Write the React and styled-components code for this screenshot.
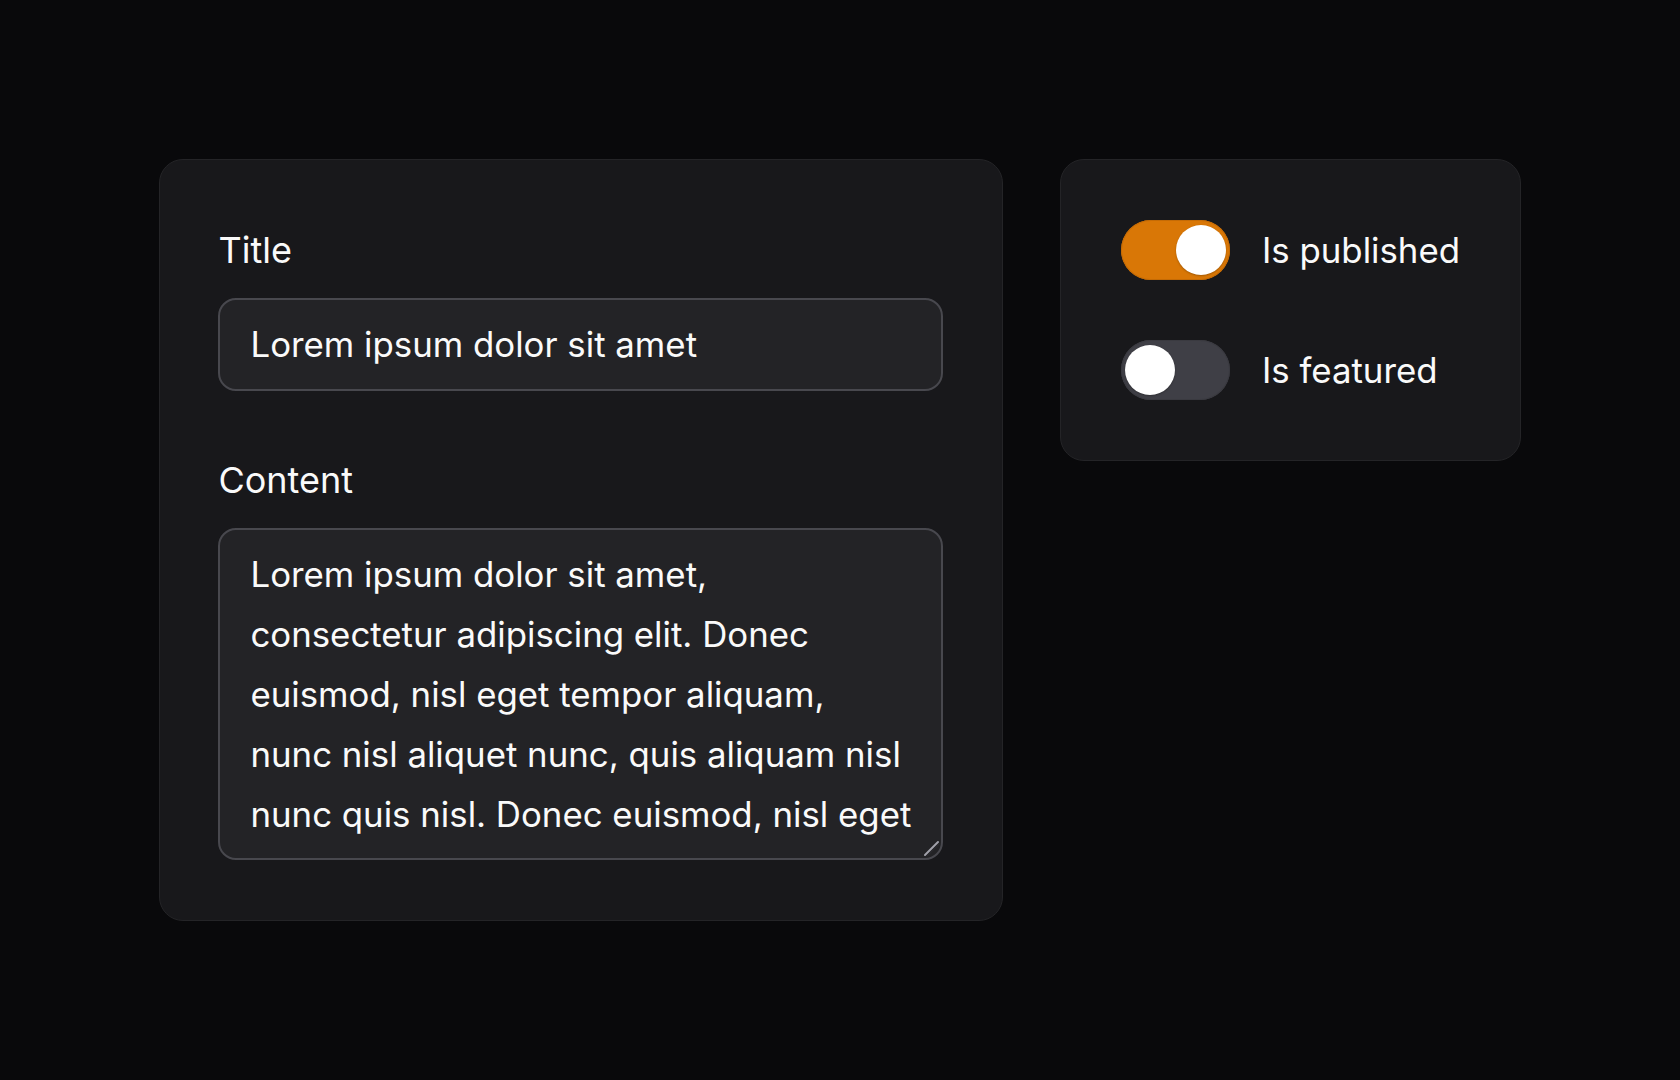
import React, { useState } from "react";
import styled, { createGlobalStyle } from "styled-components";

const Global = createGlobalStyle`
  * { box-sizing: border-box; }
  html, body { margin: 0; padding: 0; background: #09090b; }
  body { font-family: Inter, "Noto Sans", sans-serif; color: #fafafa; }
`;

const Page = styled.div`
  min-height: 100vh;
  display: flex;
  align-items: center;
  justify-content: center;
`;

const Row = styled.div`
  display: flex;
  align-items: flex-start;
  gap: 57px;
`;

const Card = styled.div`
  background: #18181b;
  border: 1.5px solid #242427;
  border-radius: 24px;
  padding: ${(p) => p.$pad || "60px"};
  width: ${(p) => p.$width || "auto"};
  display: flex;
  flex-direction: column;
  gap: ${(p) => p.$gap || "60px"};
`;

const Field = styled.div`
  display: flex;
  flex-direction: column;
  gap: 18px;
`;

const Label = styled.label`
  font-size: 36px;
  line-height: 60px;
  color: #fafafa;
`;

const Input = styled.input`
  font-family: inherit;
  font-size: 34.8px;
  line-height: 60px;
  height: 93px;
  padding: 15px 30px;
  color: #fafafa;
  background: #232326;
  border: 2px solid #48484e;
  border-radius: 18px;
  outline: none;
  width: 100%;
`;

const AreaWrap = styled.div`
  position: relative;
  display: flex;
`;

const TextArea = styled.textarea`
  font-family: inherit;
  font-size: 34.8px;
  line-height: 60px;
  height: 332px;
  padding: 14px 20px 14px 30px;
  color: #fafafa;
  background: #232326;
  border: 2px solid #48484e;
  border-radius: 18px;
  outline: none;
  width: 100%;
  overflow: hidden;
  white-space: pre;
  resize: none;
`;

const ResizeGrip = styled.svg`
  position: absolute;
  right: 3px;
  bottom: 3px;
  width: 18px;
  height: 18px;
  pointer-events: none;
`;

const ToggleRow = styled.div`
  display: flex;
  align-items: center;
  gap: 32px;
`;

const Track = styled.button`
  position: relative;
  width: 109px;
  height: 60px;
  border: none;
  padding: 0;
  border-radius: 30px;
  cursor: pointer;
  flex: none;
  background: ${(p) => (p.$on ? "#d97706" : "#3f3f46")};
  box-shadow: inset 0 0 0 1px ${(p) => (p.$on ? "#c56b05" : "#3a3a40")};
`;

const Knob = styled.span`
  position: absolute;
  top: 5px;
  left: ${(p) => (p.$on ? "55px" : "4.5px")};
  width: 50px;
  height: 50px;
  border-radius: 50%;
  background: #ffffff;
  box-shadow: 0 1px 2px rgba(0, 0, 0, 0.25);
`;

const ToggleText = styled.span`
  font-size: 34.8px;
  line-height: 60px;
  color: #fafafa;
  white-space: nowrap;
`;

function Toggle({ label, initial }) {
  const [on, setOn] = useState(initial);
  return (
    <ToggleRow>
      <Track $on={on} onClick={() => setOn(!on)} aria-pressed={on}>
        <Knob $on={on} />
      </Track>
      <ToggleText>{label}</ToggleText>
    </ToggleRow>
  );
}

const content = [
  "Lorem ipsum dolor sit amet,",
  "consectetur adipiscing elit. Donec",
  "euismod, nisl eget tempor aliquam,",
  "nunc nisl aliquet nunc, quis aliquam nisl",
  "nunc quis nisl. Donec euismod, nisl eget",
  "tempor aliquam, nunc nisl aliquet nunc,",
  "quis aliquam nisl nunc quis nisl.",
].join("\n");

export default function App() {
  return (
    <>
      <Global />
      <Page>
        <Row>
          <Card $width="844px" $pad="60px 58.5px" $gap="59.5px">
            <Field>
              <Label>Title</Label>
              <Input defaultValue="Lorem ipsum dolor sit amet" />
            </Field>
            <Field>
              <Label>Content</Label>
              <AreaWrap>
                <TextArea wrap="off" defaultValue={content} />
                <ResizeGrip viewBox="0 0 18 18">
                  <line x1="3" y1="16" x2="16" y2="3" stroke="#a1a1aa" strokeWidth="2" strokeLinecap="round" />
                  <line x1="5" y1="17" x2="17" y2="5" stroke="#2a2a2e" strokeWidth="1.2" />
                </ResizeGrip>
              </AreaWrap>
            </Field>
          </Card>
          <Card>
            <Toggle label="Is published" initial={true} />
            <Toggle label="Is featured" initial={false} />
          </Card>
        </Row>
      </Page>
    </>
  );
}
